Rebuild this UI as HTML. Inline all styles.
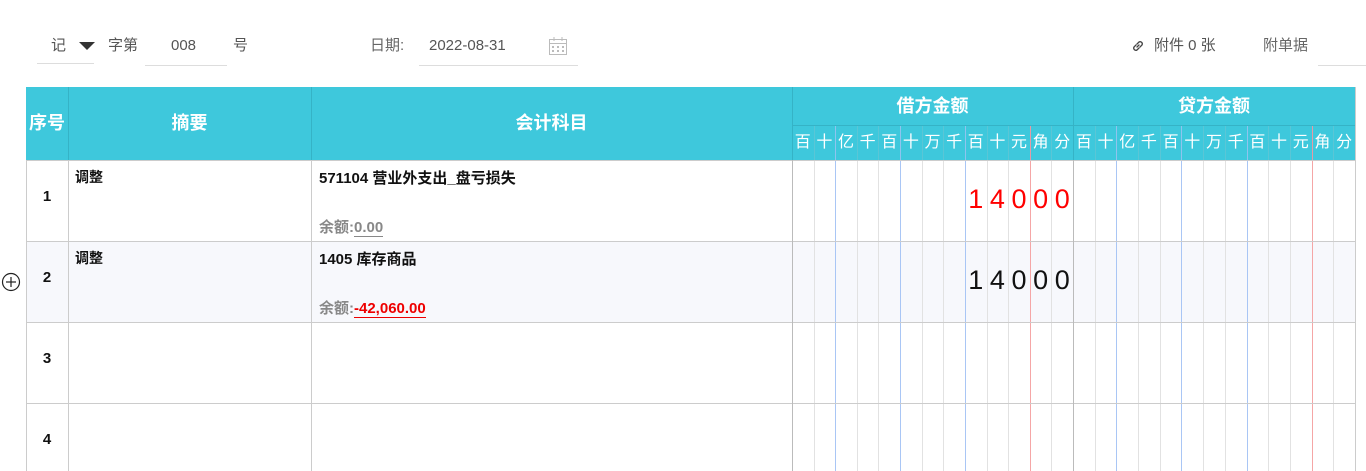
<!DOCTYPE html>
<html><head><meta charset="utf-8"><style>
*{margin:0;padding:0;box-sizing:border-box}
body{width:1366px;height:471px;overflow:hidden;background:#fff;font-family:"Liberation Sans","Noto Sans CJK SC",sans-serif;position:relative;color:#333}
.a{position:absolute}
.t{font-size:15px;color:#555;line-height:20px}
.hd{background:#3ec8dc;color:#fff;font-weight:bold;font-size:18px;text-align:center}
.v{position:absolute;width:1px}
.h{position:absolute;height:1px;background:#ccc}
.d{position:absolute;width:21.6px;text-align:center;font-size:27px;top:184px;letter-spacing:0}
.sub{position:absolute;top:126px;height:34px;line-height:34px;width:21.6px;text-align:center;color:#fff;font-size:16px}
.b{font-weight:bold;font-size:15px;color:#111}
</style></head><body>
<div class="a t" style="left:51px;top:36px">记</div>
<div class="a" style="left:79px;top:42px;width:0;height:0;border-left:8px solid transparent;border-right:8px solid transparent;border-top:8px solid #333"></div>
<div class="a" style="left:37px;top:63px;width:57px;height:1px;background:#ddd"></div>
<div class="a t" style="left:108px;top:36px">字第</div>
<div class="a t" style="left:171px;top:36px">008</div>
<div class="a" style="left:145px;top:65px;width:82px;height:1px;background:#ddd"></div>
<div class="a t" style="left:233px;top:36px">号</div>
<div class="a t" style="left:370px;top:36px;color:#666">日期:</div>
<div class="a t" style="left:429px;top:36px">2022-08-31</div>
<svg class="a" style="left:548px;top:36px" width="20" height="20" viewBox="0 0 20 20"><rect x="1.5" y="3.5" width="17" height="15" fill="none" stroke="#bbb"/><line x1="1.5" y1="7.5" x2="18.5" y2="7.5" stroke="#bbb"/><line x1="6" y1="1" x2="6" y2="5" stroke="#bbb"/><line x1="14" y1="1" x2="14" y2="5" stroke="#bbb"/><g fill="#bbb"><rect x="4" y="10" width="2" height="2"/><rect x="9" y="10" width="2" height="2"/><rect x="14" y="10" width="2" height="2"/><rect x="4" y="14" width="2" height="2"/><rect x="9" y="14" width="2" height="2"/><rect x="14" y="14" width="2" height="2"/></g></svg>
<div class="a" style="left:419px;top:65px;width:159px;height:1px;background:#ddd"></div>
<svg class="a" style="left:1131px;top:39px" width="14" height="14" viewBox="0 0 14 14"><path d="M6 8 L8 6 M5 6 L3 8 A2.2 2.2 0 0 0 6 11 L8 9 M9 8 L11 6 A2.2 2.2 0 0 0 8 3 L6 5" fill="none" stroke="#444" stroke-width="1.3" stroke-linecap="round"/></svg>
<div class="a t" style="left:1154px;top:36px">附件 0 张</div>
<div class="a t" style="left:1263px;top:36px;color:#666">附单据</div>
<div class="a" style="left:1318px;top:65px;width:48px;height:1px;background:#ddd"></div>

<div class="a hd" style="left:26px;top:87px;width:1329px;height:73px"></div>
<div class="a hd" style="left:26px;top:87px;width:42px;height:73px;line-height:73px;font-size:18px">序号</div>
<div class="a hd" style="left:68px;top:87px;width:243px;height:73px;line-height:73px">摘要</div>
<div class="a hd" style="left:311px;top:87px;width:481px;height:73px;line-height:73px">会计科目</div>
<div class="a hd" style="left:792px;top:87px;width:281px;height:39px;line-height:39px">借方金额</div>
<div class="a hd" style="left:1073px;top:87px;width:282px;height:39px;line-height:39px">贷方金额</div>
<div class="a" style="left:792px;top:125px;width:563px;height:1px;background:#35b3c6"></div>
<div class="v" style="left:68px;top:87px;height:73px;background:#35b3c6"></div>
<div class="v" style="left:311px;top:87px;height:73px;background:#35b3c6"></div>
<div class="v" style="left:792px;top:87px;height:73px;background:#35b3c6"></div>
<div class="v" style="left:1073px;top:87px;height:73px;background:#35b3c6"></div>

<div class="a" style="left:26px;top:241px;width:1329px;height:81px;background:#f7f8fc"></div>

<div id="grid"></div>

<div class="h" style="left:26px;top:160px;width:1329px"></div>
<div class="h" style="left:26px;top:241px;width:1329px"></div>
<div class="h" style="left:26px;top:322px;width:1329px"></div>
<div class="h" style="left:26px;top:403px;width:1329px"></div>
<div class="v" style="left:26px;top:160px;height:311px;background:#ccc"></div>
<div class="v" style="left:68px;top:160px;height:311px;background:#ccc"></div>
<div class="v" style="left:311px;top:160px;height:311px;background:#ccc"></div>
<div class="v" style="left:792px;top:160px;height:311px;background:#bbb"></div>
<div class="v" style="left:1073px;top:160px;height:311px;background:#bbb"></div>
<div class="v" style="left:1355px;top:87px;height:384px;background:#ccc"></div>

<div class="a b" style="left:26px;top:188px;width:42px;text-align:center">1</div>
<div class="a b" style="left:26px;top:269px;width:42px;text-align:center">2</div>
<div class="a b" style="left:26px;top:350px;width:42px;text-align:center">3</div>
<div class="a b" style="left:26px;top:431px;width:42px;text-align:center">4</div>
<div class="a b" style="left:75px;top:167px;font-size:14px">调整</div>
<div class="a b" style="left:75px;top:248px;font-size:14px">调整</div>
<div class="a b" style="left:319px;top:167px">571104 营业外支出_盘亏损失</div>
<div class="a b" style="left:319px;top:248px">1405 库存商品</div>
<div class="a b" style="left:319px;top:216px;color:#888">余额:<span style="border-bottom:1px solid #888">0.00</span></div>
<div class="a b" style="left:319px;top:297px;color:#888">余额:<span style="color:#e00;border-bottom:1px solid #e00">-42,060.00</span></div>
<svg class="a" style="left:1px;top:272px" width="20" height="20"><circle cx="10" cy="10" r="8.5" fill="none" stroke="#222" stroke-width="1.2"/><line x1="5" y1="10" x2="15" y2="10" stroke="#222" stroke-width="1.2"/><line x1="10" y1="5" x2="10" y2="15" stroke="#222" stroke-width="1.2"/></svg>

<script>
var g=document.getElementById('grid'),h='';
var lab=['百','十','亿','千','百','十','万','千','百','十','元','角','分'];
[[792,21.62],[1073,21.69]].forEach(function(s){
 for(var i=0;i<13;i++){
  var x=s[0]+s[1]*i;
  h+='<div class="sub" style="left:'+x+'px;width:'+s[1]+'px">'+lab[i]+'</div>';
  if(i>0){
   var c=(i==2||i==5||i==8)?'#a9c6f5':(i==11?'#f5a6a6':'#e2e2e2');
   var hc=(i==2||i==5||i==8)?'#8fc4ee':(i==11?'#e59aa6':'#5ac6d6');
   h+='<div class="v" style="left:'+Math.round(x)+'px;top:160px;height:311px;background:'+c+'"></div>';
   h+='<div class="v" style="left:'+Math.round(x)+'px;top:126px;height:34px;background:'+hc+'"></div>';
  }
 }
});
var ds='14000';
for(var k=0;k<5;k++){
 var x=792+21.62*(8+k);
 h+='<div class="d" style="left:'+x+'px;color:#f00">'+ds[k]+'</div>';
 h+='<div class="d" style="left:'+x+'px;top:265px;color:#111">'+ds[k]+'</div>';
}
g.innerHTML=h;
</script>
</body></html>
